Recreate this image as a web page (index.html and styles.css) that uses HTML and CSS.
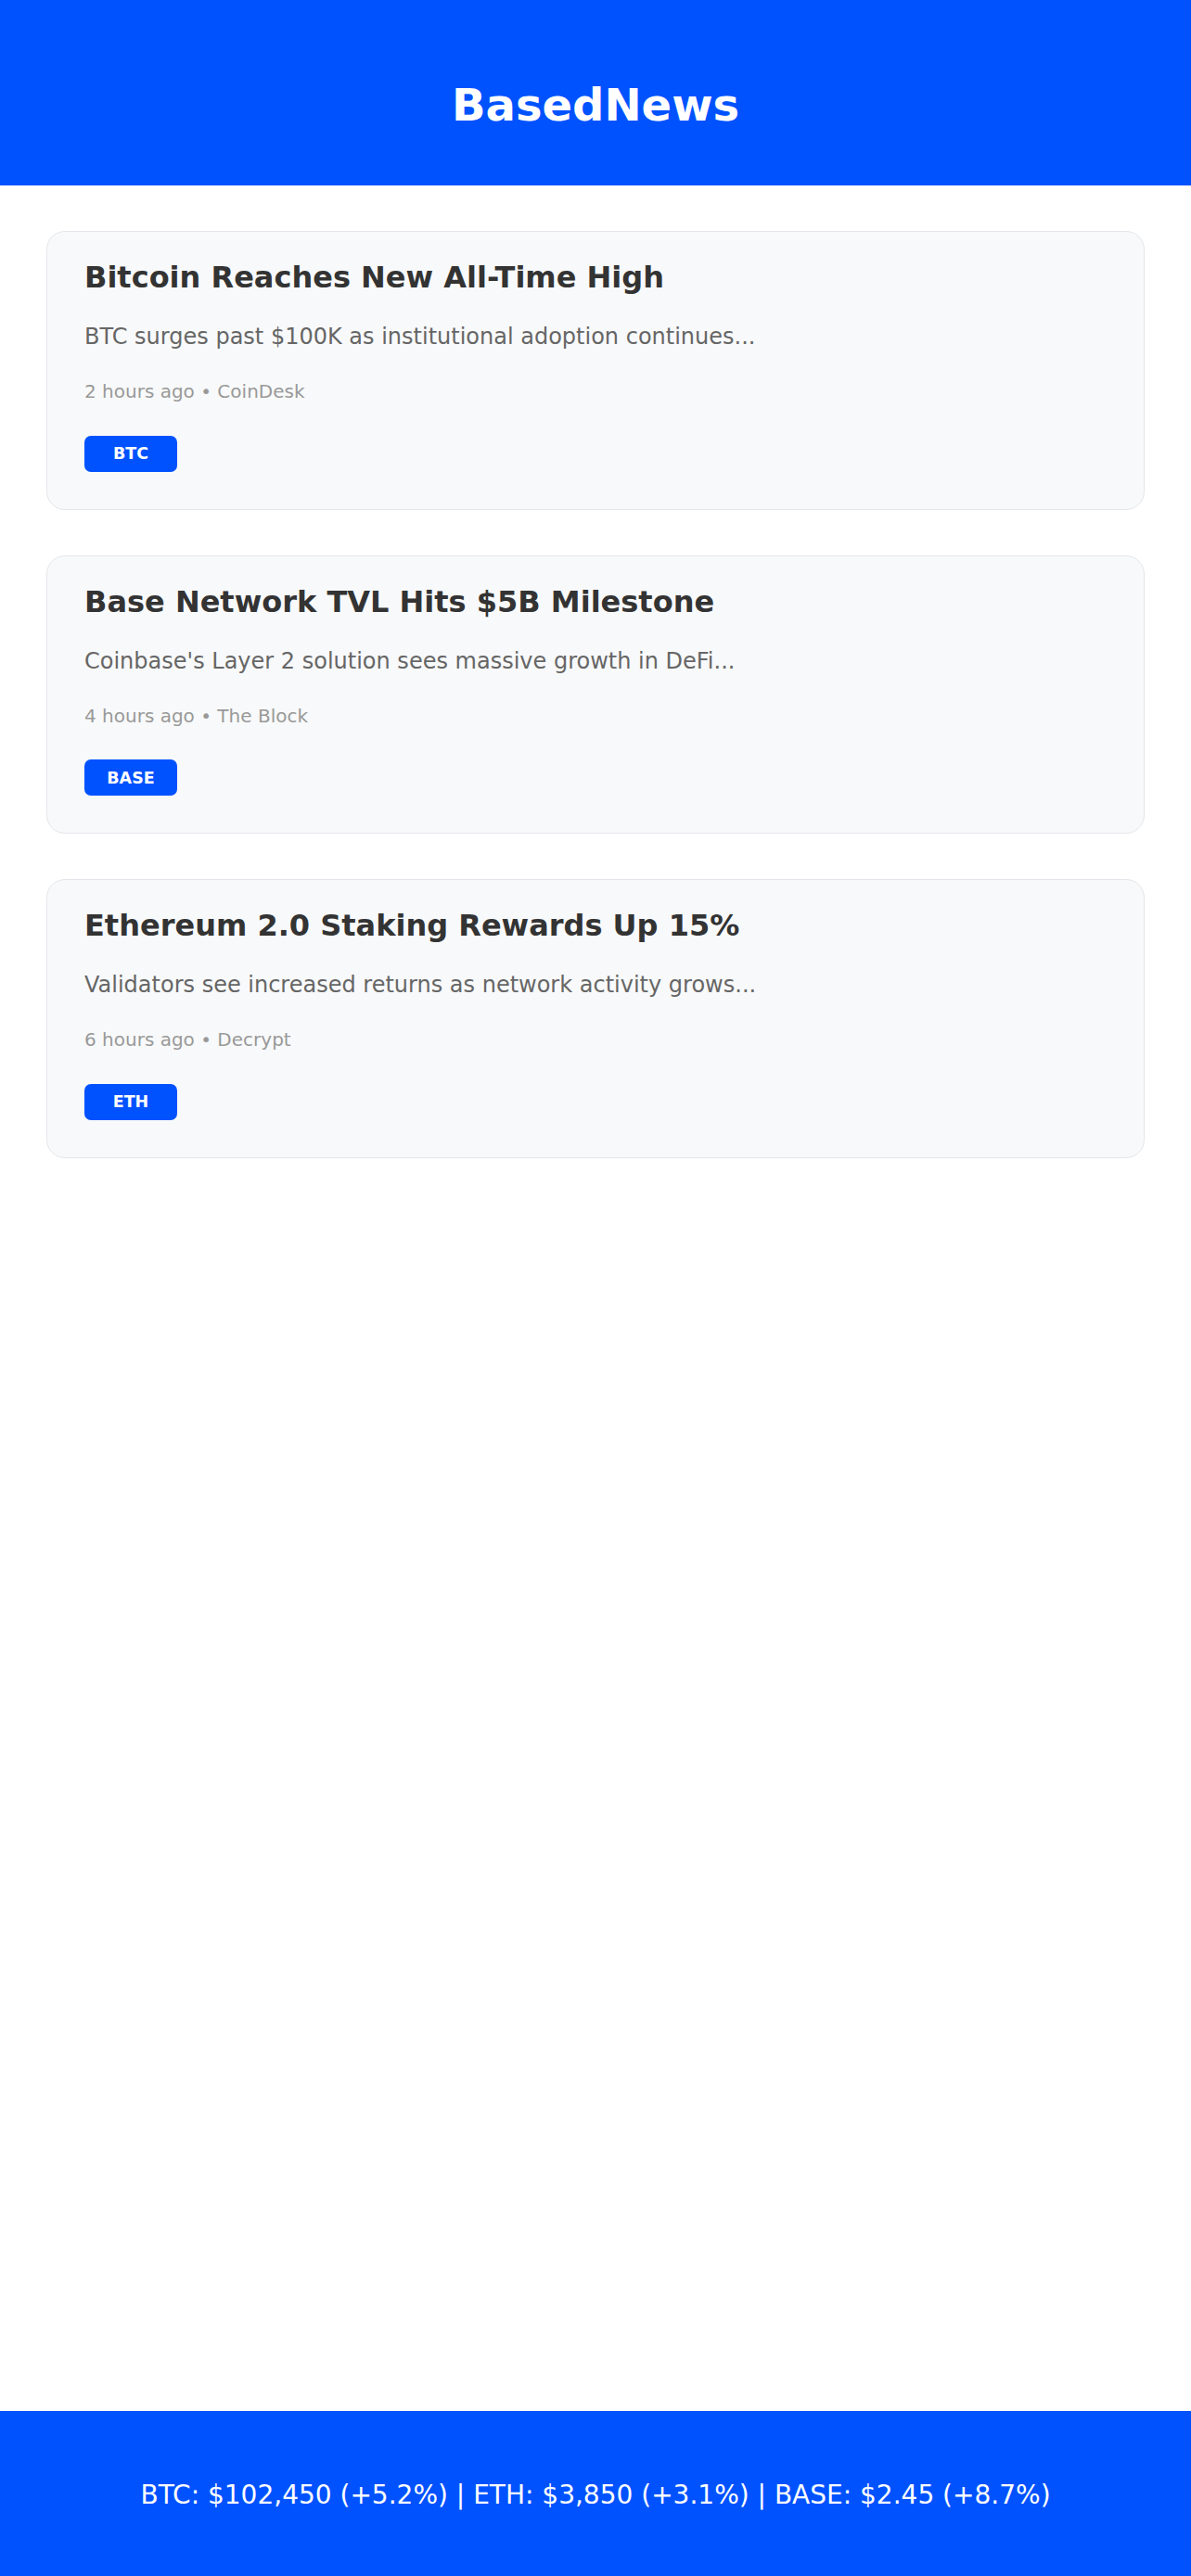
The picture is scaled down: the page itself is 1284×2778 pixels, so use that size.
FILE: index.html
```html
<!DOCTYPE html>
<html lang="en">
<head>
<meta charset="utf-8">
<title>BasedNews</title>
<link rel="stylesheet" href="styles.css">
</head>
<body>
<div class="app">
  <header class="header">
    <h1 class="brand">BasedNews</h1>
  </header>
  <main class="feed">
    <article class="card">
      <h2 class="card-title">Bitcoin Reaches New All-Time High</h2>
      <p class="card-desc">BTC surges past $100K as institutional adoption continues...</p>
      <p class="card-meta">2 hours ago • CoinDesk</p>
      <span class="tag">BTC</span>
    </article>
    <article class="card">
      <h2 class="card-title">Base Network TVL Hits $5B Milestone</h2>
      <p class="card-desc">Coinbase's Layer 2 solution sees massive growth in DeFi...</p>
      <p class="card-meta">4 hours ago • The Block</p>
      <span class="tag">BASE</span>
    </article>
    <article class="card">
      <h2 class="card-title">Ethereum 2.0 Staking Rewards Up 15%</h2>
      <p class="card-desc">Validators see increased returns as network activity grows...</p>
      <p class="card-meta">6 hours ago • Decrypt</p>
      <span class="tag">ETH</span>
    </article>
  </main>
  <footer class="ticker">BTC: $102,450 (+5.2%) | ETH: $3,850 (+3.1%) | BASE: $2.45 (+8.7%)</footer>
</div>
</body>
</html>
```

FILE: styles.css
```css
* { box-sizing: border-box; }
html, body { margin: 0; padding: 0; }
body {
  font-family: "DejaVu Sans", Verdana, sans-serif;
  background: #ffffff;
  color: #333333;
}
.app {
  min-height: 100vh;
  display: flex;
  flex-direction: column;
}
.header {
  background: #0052ff;
  height: 200px;
  padding-top: 85px;
  text-align: center;
}
.brand {
  margin: 0;
  color: #ffffff;
  font-size: 48px;
  line-height: 56px;
  font-weight: bold;
}
.feed {
  flex: 1;
  display: flex;
  flex-direction: column;
  gap: 49px;
  padding: 49px 50px 40px;
}
.card {
  display: flex;
  flex-direction: column;
  align-items: flex-start;
  background: #f8f9fa;
  border: 1px solid #e3e6ea;
  border-radius: 20px;
  padding: 30px 40px 40px;
}
.card-title {
  margin: 0 0 31px;
  font-size: 32px;
  font-weight: bold;
  color: #333333;
  line-height: normal;
}
.card-desc {
  margin: 0 0 33px;
  font-size: 24px;
  color: #666666;
  line-height: normal;
}
.card-meta {
  margin: 0 0 35.6px;
  font-size: 20px;
  color: #999999;
  line-height: normal;
}
.tag {
  display: flex;
  align-items: center;
  justify-content: center;
  width: 100px;
  height: 39px;
  background: #0052ff;
  color: #ffffff;
  border-radius: 7px;
  font-size: 17.5px;
  font-weight: bold;
}
.ticker {
  background: #0052ff;
  color: #ffffff;
  text-align: center;
  font-size: 28px;
  line-height: 32px;
  padding: 75px 20px 71px;
}
```
